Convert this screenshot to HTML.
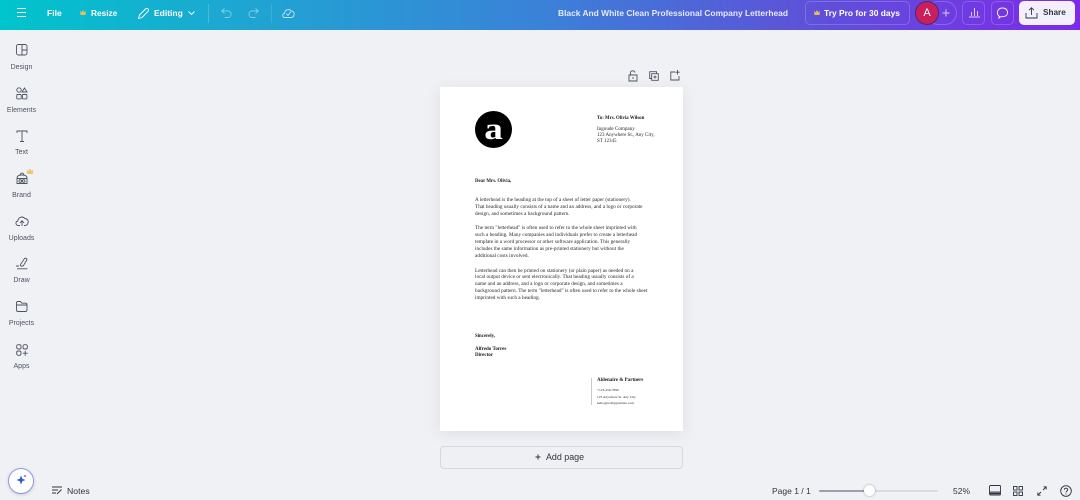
<!DOCTYPE html>
<html><head><meta charset="utf-8">
<style>
*{box-sizing:border-box}
html,body{margin:0;padding:0}
body{width:1080px;height:500px;overflow:hidden;background:#f0f1f5;position:relative;font-family:"Liberation Sans",sans-serif}
.a{position:absolute;white-space:nowrap}
.top{position:absolute;left:0;top:0;width:1080px;height:30px;background:linear-gradient(90deg,#00c4cc 0%,#1ea6d2 22%,#3a82d8 50%,#5a56d8 72%,#7d2ae8 100%)}
.t{position:absolute;white-space:nowrap;color:#fff;font-weight:bold;font-size:8.3px;line-height:12px;transform:translateY(-50%)}
.side{position:absolute;width:43px;left:0;text-align:center;font-size:7px;color:#4c5360;line-height:9px}
.s{position:absolute;white-space:nowrap;font-family:"Liberation Serif",serif;color:#2a2a2a;font-size:5.25px;line-height:6px;transform:translateY(calc(-50% + 1.2px))}
.b{font-weight:bold;color:#1a1a1a;font-size:4.85px}
svg{position:absolute;overflow:visible;fill:none}
.i{stroke:#4c5360;stroke-width:.9}
.w{stroke:#fff;stroke-width:.9}
</style></head><body>
<div class="top"></div>

<svg style="left:17px;top:8px" width="9" height="9" class="w" stroke-width=".8"><path d="M0 .5h9M0 4.500h9M0 8.500h9"/></svg>
<div class="t" style="left:47px;top:13px;font-size:8.6px">File</div>
<svg style="left:80px;top:10px" width="6" height="5"><path d="M0 .8L1.500 2.500L3 0L4.500 2.500L6 .8L5.500 5H.5Z" fill="#e8bd5f"/></svg>
<div class="t" style="left:91px;top:13px">Resize</div>
<svg style="left:138px;top:8px" width="11" height="11" class="w"><path d="M.5 10.500L1.500 7L7.500 1C8.500 .2 9.500 .3 10.100 1C10.700 1.600 10.700 2.400 10 3.300L4 9.500Z"/></svg>
<div class="t" style="left:154px;top:13px;font-size:8.5px">Editing</div>
<svg style="left:188px;top:11px" width="7" height="4" class="w"><path d="M.5 .5L3.500 3.500L6.500 .5"/></svg>
<div class="a" style="left:208px;top:4px;width:1px;height:19px;background:#ffffff33"></div>
<svg style="left:221px;top:8px" width="11" height="10" stroke="#ffffff70"><path d="M3.500 .5L.7 3L3.500 5.500M.7 3H7C11 3 11 9.500 7 9.500H3.500"/></svg>
<svg style="left:248px;top:8px" width="11" height="10" stroke="#ffffff70"><path d="M7.500 .5L10.300 3L7.500 5.500M10.300 3H4C0 3 0 9.500 4 9.500H7.500"/></svg>
<div class="a" style="left:271px;top:4px;width:1px;height:19px;background:#ffffff22"></div>
<svg style="left:282px;top:8px" width="13" height="10" stroke="#ffffffb0"><path d="M3 9.500C.3 9.500 -.2 6 2.500 5.300C2.700 2 7 0 9 3C11.500 3 12.800 5.300 12 7.200C11.500 8.800 10.500 9.500 9.300 9.500ZM4.300 5.700L6 7.400L8.800 3.800"/></svg>

<div class="t" style="left:558px;top:13px;color:#e6eafa;font-size:8.42px">Black And White Clean Professional Company Letterhead</div>
<div class="a" style="left:805px;top:1px;width:105px;height:24px;border:1px solid #ffffff30;border-radius:5px"></div>
<svg style="left:814px;top:10px" width="6" height="5"><path d="M0 .8L1.500 2.500L3 0L4.500 2.500L6 .8L5.500 5H.5Z" fill="#e8bd5f"/></svg>
<div class="t" style="left:824px;top:13px;font-size:8.45px">Try Pro for 30 days</div>
<div class="a" style="left:926px;top:1px;width:31px;height:24px;border:1px solid #ffffff35;border-radius:12px"></div>
<div class="a" style="left:915px;top:1px;width:24px;height:24px;border-radius:50%;background:#c91f5c;border:1px solid #4a2a6a;color:#fff;font-size:11px;text-align:center;line-height:22px">A</div>
<svg style="left:942px;top:9px" width="8" height="8" stroke="#ffffffc0"><path d="M4 .5V7.500M.5 4H7.500"/></svg>
<div class="a" style="left:962px;top:1px;width:23px;height:24px;border:1px solid #ffffff30;border-radius:5px"></div>
<svg style="left:969px;top:7px" width="11" height="11" stroke="#ffffffc0"><path d="M2.500 5V9M5.500 1V9M8.500 4V9M0 10H11"/></svg>
<div class="a" style="left:991px;top:1px;width:23px;height:24px;border:1px solid #ffffff30;border-radius:5px"></div>
<svg style="left:996px;top:7px" width="13" height="12" class="w"><path d="M3.500 9.500C0 7 1 1 6.500 1C12 1 13 7 9.500 9C7.500 10 5.500 9.500 4.500 9.800L3 11Z"/></svg>
<div class="a" style="left:1019px;top:1px;width:56px;height:24px;background:#f3effc;border-radius:5px"></div>
<svg style="left:1025px;top:7px" width="13" height="12" stroke="#2f3540" stroke-width=".9"><path d="M1 6V11H12V6M6.500 8V1M4 3.200L6.500 .7L9 3.200"/></svg>
<div class="a" style="left:1043px;top:7px;color:#2f3540;font-size:8.2px;font-weight:bold;line-height:12px">Share</div>

<!-- sidebar -->
<svg style="left:16px;top:44px" width="12" height="12" class="i"><rect x=".5" y=".5" width="10.500" height="10.500" rx="2"/><path d="M6 .5V11M6 6H11"/></svg>
<div class="side" style="top:63px">Design</div>
<svg style="left:16px;top:87px" width="12" height="13" class="i"><circle cx="3" cy="3" r="2.200"/><path d="M8.500 1L11 5H6Z"/><rect x=".8" y="7.500" width="4.400" height="4.400" rx=".7"/><rect x="6.500" y="7.500" width="4.400" height="4.400" rx=".7"/></svg>
<div class="side" style="top:106px">Elements</div>
<svg style="left:16px;top:130px" width="12" height="12" class="i"><path d="M1 3V1H11V3M6 1V11.500M4 11.500H8"/></svg>
<div class="side" style="top:148px">Text</div>
<svg style="left:16px;top:172px" width="12" height="12" class="i"><path d="M1 6.500C1 3.500 3 3 6 3C9 3 11 3.500 11 6.500V11.500H1ZM1 6.500H11M4 3L5 1.200H7L8 3"/><circle cx="4.300" cy="9" r="1.300"/><circle cx="7.700" cy="9" r="1.300"/></svg>
<svg style="left:26px;top:168px" width="8" height="7"><path d="M0.500 1.500L2.200 3.200L4 .5L5.800 3.200L7.500 1.500L6.800 6H1.200Z" fill="#f5c26b"/></svg>
<div class="side" style="top:191px">Brand</div>
<svg style="left:15px;top:215px" width="14" height="12" class="i"><path d="M3.500 10.500C.5 10.500 0 6.500 2.800 6C3 2.500 7.500 .5 9.800 3.500C12.500 3.500 13.800 6 13 8C12.500 9.700 11.500 10.500 10 10.500H9M7 11V6M5 7.800L7 5.800L9 7.800M5 10.500H3.500"/></svg>
<div class="side" style="top:234px">Uploads</div>
<svg style="left:15px;top:257px" width="14" height="13" class="i"><path d="M5.500 7.500L9.500 1.500C10.500 .5 12.500 1.800 11.800 3L8.500 8.500C7.500 9.500 5 9.500 5.500 7.500ZM1 9H4M2 11.800H12.500"/></svg>
<div class="side" style="top:276px">Draw</div>
<svg style="left:16px;top:301px" width="12" height="11" class="i"><path d="M.5 2C.5 1 1 .5 2 .5H4.500L5.800 2.200H9.500C10.500 2.200 11 2.800 11 3.500V9C11 10 10.500 10.500 9.500 10.500H2C1 10.500 .5 10 .5 9ZM.5 4H11"/></svg>
<div class="side" style="top:319px">Projects</div>
<svg style="left:16px;top:344px" width="12" height="12" class="i"><rect x=".7" y=".7" width="4.300" height="4.300" rx="1.500"/><rect x="7" y=".7" width="4.300" height="4.300" rx="1.500"/><rect x=".7" y="7" width="4.300" height="4.300" rx="1.500"/><path d="M9.200 6.800V11.800M6.800 9.200H11.800"/></svg>
<div class="side" style="top:362px">Apps</div>

<!-- page tools -->
<svg style="left:628px;top:70px" width="10" height="12" class="i"><path d="M1 5H9V11H1ZM2.500 5V2.500C2.500 .3 6.500 .3 7 2.500M5 7V9"/></svg>
<svg style="left:649px;top:71px" width="10" height="10" class="i"><path d="M2.500 7.500H.7V.7H7.500V2.500M2.700 2.700H9.300V9.300H2.700ZM4.500 6H7.500M6 4.500V7.500" stroke-width=".9"/></svg>
<svg style="left:670px;top:70px" width="10" height="11" class="i"><path d="M5 2H.8V10H9V6M7.500 0V4.500M5.300 2.200H9.800"/></svg>

<!-- page -->
<div class="a" style="left:440px;top:87px;width:243px;height:344px;background:#fff;box-shadow:0 3px 14px rgba(60,66,87,.10)"></div>
<div class="a" style="left:475px;top:111px;width:37px;height:37px;border-radius:50%;background:#000"></div>
<div class="a" style="left:475px;top:111px;width:37px;height:37px;text-align:center;color:#fff;font-family:'Liberation Serif',serif;font-weight:bold;font-size:31px;line-height:36px;transform:scaleX(1.2)">a</div>

<div class="s b" style="left:597px;top:118px">To: Mrs. Olivia Wilson</div>
<div class="s" style="left:597px;top:128px;font-size:5.1px">Ingoude Company</div>
<div class="s" style="left:597px;top:134.500px;font-size:5px">123 Anywhere St., Any City,</div>
<div class="s" style="left:597px;top:141px;font-size:5px">ST 12345</div>

<div class="s b" style="left:475px;top:181px">Dear Mrs. Olivia,</div>

<div class="s" style="left:475px;top:198.500px">A letterhead is the heading at the top of a sheet of letter paper (stationery).</div>
<div class="s" style="left:475px;top:205.500px">That heading usually consists of a name and an address, and a logo or corporate</div>
<div class="s" style="left:475px;top:212.500px">design, and sometimes a background pattern.</div>

<div class="s" style="left:475px;top:227px">The term "letterhead" is often used to refer to the whole sheet imprinted with</div>
<div class="s" style="left:475px;top:234px">such a heading. Many companies and individuals prefer to create a letterhead</div>
<div class="s" style="left:475px;top:241px">template in a word processor or other software application. This generally</div>
<div class="s" style="left:475px;top:248px">includes the same information as pre-printed stationery but without the</div>
<div class="s" style="left:475px;top:254.500px">additional costs involved.</div>

<div class="s" style="left:475px;top:269.500px">Letterhead can then be printed on stationery (or plain paper) as needed on a</div>
<div class="s" style="left:475px;top:276px">local output device or sent electronically. That heading usually consists of a</div>
<div class="s" style="left:475px;top:283px">name and an address, and a logo or corporate design, and sometimes a</div>
<div class="s" style="left:475px;top:290px">background pattern. The term "letterhead" is often used to refer to the whole sheet</div>
<div class="s" style="left:475px;top:297px">imprinted with such a heading.</div>

<div class="s b" style="left:475px;top:335.500px">Sincerely,</div>
<div class="s b" style="left:475px;top:349px;font-size:5px">Alfredo Torres</div>
<div class="s b" style="left:475px;top:354.500px;font-size:5px">Director</div>

<div class="a" style="left:591px;top:378px;width:1px;height:27px;background:#c9c9c9"></div>
<div class="s b" style="left:597px;top:380px;font-size:5px">Aldenaire &amp; Partners</div>
<div class="s" style="left:597px;top:389px;font-size:3.5px">+123-456-7890</div>
<div class="s" style="left:597px;top:395.500px;font-size:3.5px">123 Anywhere St. Any City</div>
<div class="s" style="left:597px;top:401.500px;font-size:3.5px">hello@reallygreatsite.com</div>

<!-- add page -->
<div class="a" style="left:440px;top:446px;width:243px;height:23px;background:#eff0f4;border:1px solid #d5d8de;border-radius:4px"></div>
<svg style="left:535px;top:454px" width="6" height="6" stroke="#2f3540"><path d="M3 .5V5.500M.5 3H5.500"/></svg>
<div class="a" style="left:546px;top:451px;font-size:8.9px;line-height:13px;color:#2f3540">Add page</div>

<!-- bottom -->
<div class="a" style="left:8px;top:468px;width:26px;height:26px;border-radius:50%;background:#fff;border:1px solid #8f9be0;box-shadow:0 1px 3px rgba(60,66,87,.2)"></div>
<svg style="left:15px;top:474px" width="12" height="12"><path d="M6 1.500L7.300 4.700L10.500 6L7.300 7.300L6 10.500L4.700 7.300L1.500 6L4.700 4.700Z" fill="#2e5fd8"/><path d="M10 0.500L10.500 1.500L11.500 2L10.500 2.500L10 3.500L9.500 2.500L8.500 2L9.500 1.500Z" fill="#6b4fd8"/></svg>
<svg style="left:52px;top:486px" width="11" height="9" stroke="#2f3540" stroke-width=".9"><path d="M0 1H10M0 4H6M0 7H4M5 8L9.500 3.500"/></svg>
<div class="a" style="left:67px;top:485px;font-size:8.7px;line-height:12px;color:#2f3540">Notes</div>

<div class="a" style="left:772px;top:485px;font-size:8.5px;line-height:12px;color:#2f3540">Page 1 / 1</div>
<div class="a" style="left:819px;top:490px;width:119px;height:2px;background:#d9dce2;border-radius:1px"></div>
<div class="a" style="left:819px;top:490px;width:50px;height:2px;background:#9aa0ad;border-radius:1px"></div>
<div class="a" style="left:864px;top:485px;width:11px;height:11px;border-radius:50%;background:#fff;box-shadow:0 0 2px rgba(40,50,70,.45)"></div>
<div class="a" style="left:953px;top:485px;font-size:8.5px;line-height:12px;color:#2f3540">52%</div>
<svg style="left:989px;top:485px" width="12" height="11" stroke="#2f3540" stroke-width=".9"><rect x=".5" y=".5" width="11" height="9.500" rx="1"/><path d="M.5 7H11.500"/><path d="M1 8.500H11" stroke-width="1.500"/></svg>
<svg style="left:1013px;top:486px" width="10" height="10" stroke="#2f3540" stroke-width=".9"><rect x=".5" y=".5" width="3.500" height="3.500"/><rect x="6" y=".5" width="3.500" height="3.500"/><rect x=".5" y="6" width="3.500" height="3.500"/><rect x="6" y="6" width="3.500" height="3.500"/></svg>
<svg style="left:1037px;top:486px" width="10" height="10" stroke="#2f3540" stroke-width=".9"><path d="M6 4L9 1M6.500 .8H9.200V3.500M4 6L1 9M.8 6.500V9.200H3.500"/></svg>
<svg style="left:1060px;top:485px" width="12" height="12" stroke="#2f3540" stroke-width=".9"><circle cx="6" cy="6" r="5.300"/><path d="M4.300 4.700C4.300 2.700 7.700 2.700 7.700 4.700C7.700 6 6 6 6 7.500M6 8.500V9.500"/></svg>
</body></html>
